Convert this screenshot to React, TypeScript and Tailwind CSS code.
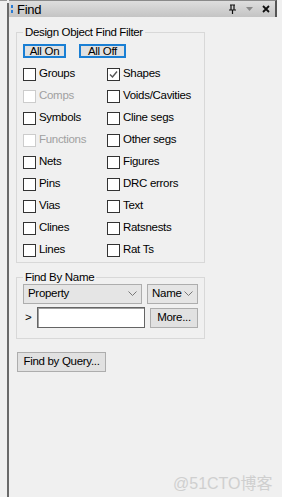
import React from 'react';

const font = { fontFamily: '"Liberation Sans", Arial, sans-serif' };

const CheckBox = ({ label, checked = false, disabled = false }: { label: string; checked?: boolean; disabled?: boolean }) => (
  <div className="flex items-center h-[22px]">
    <div
      className={`w-[13px] h-[13px] shrink-0 border bg-white flex items-center justify-center ${
        disabled ? 'border-[#cccccc]' : 'border-[#333333]'
      }`}
    >
      {checked && (
        <svg width="9" height="9" viewBox="0 0 9 9">
          <path d="M1 4.5 L3.5 7 L8 1.5" stroke="#555" strokeWidth="1.4" fill="none" />
        </svg>
      )}
    </div>
    <span className={`ml-[3px] whitespace-nowrap text-[11.5px] tracking-[-0.3px] ${disabled ? 'text-[#a0a0a0]' : 'text-black'}`}>
      {label}
    </span>
  </div>
);

const Chevron = () => (
  <svg width="9" height="6" viewBox="0 0 9 6">
    <path d="M0.5 0.5 L4.5 4.5 L8.5 0.5" stroke="#777" strokeWidth="1" fill="none" />
  </svg>
);

const leftCol = [
  { label: 'Groups' },
  { label: 'Comps', disabled: true },
  { label: 'Symbols' },
  { label: 'Functions', disabled: true },
  { label: 'Nets' },
  { label: 'Pins' },
  { label: 'Vias' },
  { label: 'Clines' },
  { label: 'Lines' },
];

const rightCol = [
  { label: 'Shapes', checked: true },
  { label: 'Voids/Cavities' },
  { label: 'Cline segs' },
  { label: 'Other segs' },
  { label: 'Figures' },
  { label: 'DRC errors' },
  { label: 'Text' },
  { label: 'Ratsnests' },
  { label: 'Rat Ts' },
];

const App = () => {
  return (
    <div className="w-[282px] h-[497px] bg-[#f0f0f0] flex overflow-hidden relative" style={font}>
      <div className="w-[7px] bg-[#f0f0f0] border-t border-[#9a9a9a]" />
      <div className="w-[2px] bg-[#6a6a6a] mt-[3px]" />
      <div className="flex-1 flex flex-col">
        {/* title bar */}
        <div className="h-[17px] w-[268px] flex items-center bg-gradient-to-b from-[#dedede] to-[#c4c4c4] border-r-2 border-[#555] border-t border-t-[#8a8a8a]">
          <div className="ml-[2px] flex flex-col gap-[2px]">
            <div className="w-[2px] h-[3px] bg-[#2a7bd4]" />
            <div className="w-[2px] h-[3px] bg-[#2a7bd4]" />
          </div>
          <span className="ml-[4px] text-[13px] tracking-[-0.3px] text-black leading-none">Find</span>
          <div className="ml-auto flex items-center gap-[9px] mr-[5px]">
            <svg width="9" height="10" viewBox="0 0 9 10">
              <path d="M2 1 H7 M3 1 V6 M6 1 V6 M1 6 H8 M4.5 6 V10" stroke="#111" strokeWidth="1.2" fill="none" />
            </svg>
            <svg width="7" height="4" viewBox="0 0 7 4">
              <path d="M0 0 H7 L3.5 4 Z" fill="#888" />
            </svg>
            <svg width="8" height="8" viewBox="0 0 8 8">
              <path d="M1 1 L7 7 M7 1 L1 7" stroke="#111" strokeWidth="1.8" />
            </svg>
          </div>
        </div>

        {/* Design Object Find Filter */}
        <div className="ml-[7px] mt-[15px] w-[189px] h-[231px] border border-[#d8d8d8] relative pt-[10px] px-[6px]">
          <span className="absolute -top-[8px] left-[6px] px-[2px] bg-[#f0f0f0] text-[11.5px] tracking-[-0.35px] leading-[14px] text-black whitespace-nowrap">
            Design Object Find Filter
          </span>
          <div className="flex gap-[13px] mt-[1px]">
            <button className="w-[43px] h-[14px] border-2 border-[#1a7fd4] bg-[#e1e1e1] text-[11.5px] tracking-[-0.3px] leading-[10px] text-black">
              All On
            </button>
            <button className="w-[47px] h-[14px] border-2 border-[#1a7fd4] bg-[#e1e1e1] text-[11.5px] tracking-[-0.3px] leading-[10px] text-black">
              All Off
            </button>
          </div>
          <div className="flex mt-[5px]">
            <div className="w-[84px] shrink-0 flex flex-col">
              {leftCol.map((c) => (
                <CheckBox key={c.label} label={c.label} disabled={c.disabled} />
              ))}
            </div>
            <div className="flex flex-col">
              {rightCol.map((c) => (
                <CheckBox key={c.label} label={c.label} checked={c.checked} />
              ))}
            </div>
          </div>
        </div>

        {/* Find By Name */}
        <div className="ml-[7px] mt-[14px] w-[189px] h-[62px] border border-[#d8d8d8] relative pt-[6px] px-[6px]">
          <span className="absolute -top-[8px] left-[6px] px-[2px] bg-[#f0f0f0] text-[11.5px] tracking-[-0.3px] leading-[14px] text-black">
            Find By Name
          </span>
          <div className="flex gap-[5px]">
            <div className="w-[122px] h-[20px] border border-[#adadad] bg-[#e5e5e5] flex items-center px-[4px] text-[11.5px] tracking-[-0.3px]">
              <span>Property</span>
              <span className="ml-auto"><Chevron /></span>
            </div>
            <div className="w-[52px] h-[20px] border border-[#adadad] bg-[#e5e5e5] flex items-center px-[4px] text-[11.5px] tracking-[-0.3px]">
              <span>Name</span>
              <span className="ml-auto"><Chevron /></span>
            </div>
          </div>
          <div className="flex items-center mt-[3px]">
            <span className="w-[14px] text-[11.5px] pl-[2px]">&gt;</span>
            <div className="w-[108px] h-[21px] border border-[#646464] bg-white shadow-[inset_1px_1px_0_#a0a0a0]" />
            <button className="ml-[5px] w-[48px] h-[20px] border border-[#adadad] bg-[#e1e1e1] text-[11.5px] tracking-[-0.3px] text-black">
              More...
            </button>
          </div>
        </div>

        <button className="ml-[8px] mt-[13px] w-[89px] h-[20px] border border-[#adadad] bg-[#e1e1e1] text-[11.5px] tracking-[-0.3px] text-black whitespace-nowrap">
          Find by Query...
        </button>
      </div>

      <span
        className="absolute left-[173px] top-[472px] text-[16px] text-[#cfcfcf]"
        style={{ fontFamily: '"Liberation Sans", "Noto Sans CJK SC", sans-serif' }}
      >
        @51CTO博客
      </span>
    </div>
  );
};

export default App;
